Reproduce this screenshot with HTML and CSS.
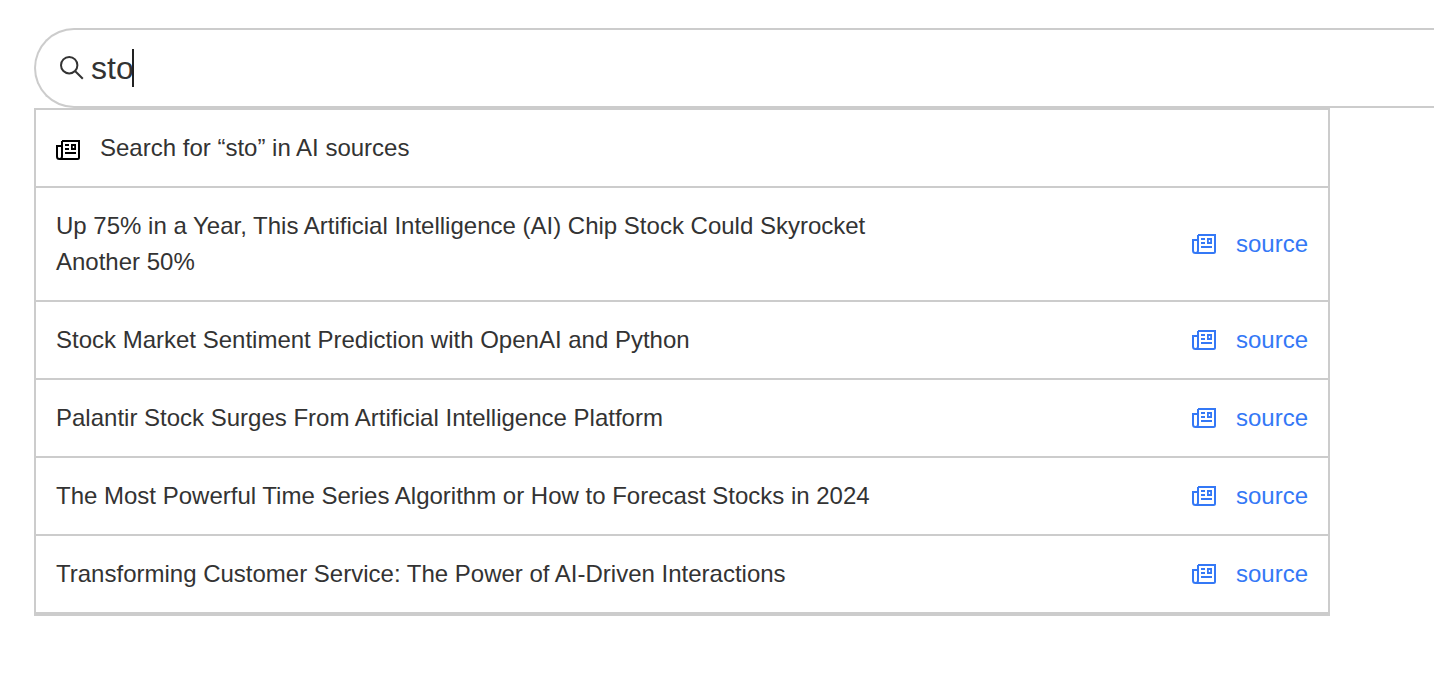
FILE: index.html
```html
<!DOCTYPE html>
<html lang="en">
<head>
<meta charset="utf-8">
<meta name="viewport" content="width=device-width, initial-scale=1">
<title>Search</title>
<link rel="stylesheet" href="styles.css">
</head>
<body>
<svg class="sprite" aria-hidden="true">
  <symbol id="news" viewBox="0 0 24 20">
    <path fill="none" stroke="currentColor" stroke-width="2" d="M6 1h17v16.500q0 1.500-1.500 1.500H3.500Q1 19 1 16.500V6h5M6 1v15.500Q6 19 3.500 19"/>
    <path fill="none" stroke="currentColor" stroke-width="2" d="M9 5h4M9 9h4M9 13h11"/>
    <path fill="currentColor" fill-rule="evenodd" d="M15 4h5v6h-5zM16.800 6v2h1.400V6z"/>
  </symbol>
</svg>
<main class="page">
  <form class="search" role="search">
    <label class="field" for="query">
      <svg class="search-icon" viewBox="0 0 24 24" role="img" aria-label="Search">
        <circle cx="9.200" cy="9.200" r="8.200"/>
        <path d="M15 15l7.800 7.800"/>
      </svg>
      <input class="query" id="query" type="text" value="sto" autocomplete="off">
      <span class="caret"></span>
    </label>
  </form>
  <ul class="results">
    <li class="row row-lead"><svg class="news-icon" aria-hidden="true"><use href="#news"/></svg><span>Search for “sto” in AI sources</span></li>
    <li class="row"><span class="title">Up 75% in a Year, This Artificial Intelligence (AI) Chip Stock Could Skyrocket Another 50%</span><a class="source" href="#"><svg class="news-icon" aria-hidden="true"><use href="#news"/></svg>source</a></li>
    <li class="row"><span class="title">Stock Market Sentiment Prediction with OpenAI and Python</span><a class="source" href="#"><svg class="news-icon" aria-hidden="true"><use href="#news"/></svg>source</a></li>
    <li class="row"><span class="title">Palantir Stock Surges From Artificial Intelligence Platform</span><a class="source" href="#"><svg class="news-icon" aria-hidden="true"><use href="#news"/></svg>source</a></li>
    <li class="row"><span class="title">The Most Powerful Time Series Algorithm or How to Forecast Stocks in 2024</span><a class="source" href="#"><svg class="news-icon" aria-hidden="true"><use href="#news"/></svg>source</a></li>
    <li class="row"><span class="title">Transforming Customer Service: The Power of AI-Driven Interactions</span><a class="source" href="#"><svg class="news-icon" aria-hidden="true"><use href="#news"/></svg>source</a></li>
  </ul>
</main>
</body>
</html>
```
FILE: styles.css
```css
* {
  box-sizing: border-box;
}

body {
  margin: 0;
  background: #fff;
  color: #333;
  font: 24px/36px "Liberation Sans", Arial, sans-serif;
}

.sprite {
  display: none;
}

.page {
  padding: 28px 0 28px 34px;
}

.field {
  display: flex;
  align-items: center;
  height: 80px;
  padding-left: 24px;
  border: 2px solid #ccc;
  border-right: 0;
  border-radius: 40px 0 0 40px;
  cursor: text;
}

.search-icon {
  width: 24px;
  height: 24px;
  margin-right: 7px;
  fill: none;
  stroke: #333;
  stroke-width: 2;
}

.query {
  field-sizing: content;
  padding: 0;
  border: 0;
  outline: 0;
  background: transparent;
  color: inherit;
  font-family: inherit;
  font-size: 32px;
  line-height: 40px;
  caret-color: transparent;
}

.caret {
  width: 2px;
  height: 38px;
  margin-left: -2px;
  background: #222;
}

.results {
  margin: 0 104px 0 0;
  padding: 0;
  border: 2px solid #ccc;
  background: #fff;
  list-style: none;
}

.row {
  display: flex;
  align-items: center;
  justify-content: space-between;
  padding: 20px;
  border-bottom: 2px solid #ccc;
}

.row-lead {
  justify-content: flex-start;
  gap: 20px;
}

.row-lead .news-icon {
  color: #000;
  margin-top: 4px;
}

.title {
  max-width: 70%;
}

.source {
  display: flex;
  align-items: center;
  gap: 20px;
  color: #3478f6;
  text-decoration: none;
}

.news-icon {
  flex: none;
  width: 24px;
  height: 20px;
}
```
